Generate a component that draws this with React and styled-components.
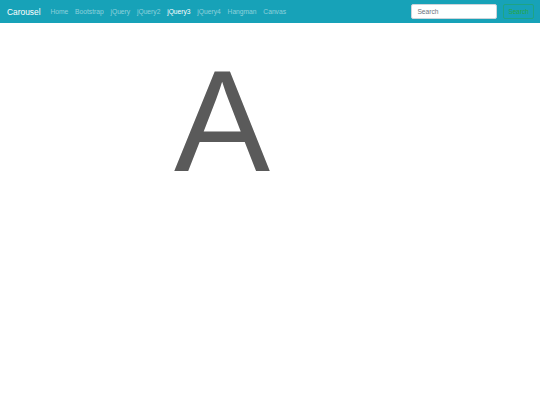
import React from 'react';
import styled, { createGlobalStyle } from 'styled-components';

const GlobalStyle = createGlobalStyle`
    body{
        margin: 0;
        background: #fff;
        font-family: "Liberation Sans", Arial, sans-serif;
    }
`;

const links = ['Home', 'Bootstrap', 'jQuery', 'jQuery2', 'jQuery3', 'jQuery4', 'Hangman', 'Canvas'];

function App() {
    return (
        <>
            <GlobalStyle />
            <NavbarStyled>
                <a className="brand" href="#">Carousel</a>
                <ul className="nav">
                    {links.map((l) => (
                        <NavItem key={l} active={l === 'jQuery3'}>
                            <a href="#">{l}</a>
                        </NavItem>
                    ))}
                </ul>
                <form className="search" onSubmit={(e) => e.preventDefault()}>
                    <input type="search" placeholder="Search" />
                    <button type="submit">Search</button>
                </form>
            </NavbarStyled>
            <SlideStyled>
                <div className="letter">A</div>
            </SlideStyled>
        </>
    )
}

const NavbarStyled = styled.nav`
    display: flex;
    align-items: center;
    height: 23px;
    padding: 0 6px 0 7px;
    background-color: #17a2b8;
    box-sizing: border-box;

    .brand{
        font-size: 8.4px;
        color: #fff;
        text-decoration: none;
        margin-right: 6.5px;
        white-space: nowrap;
    }

    .nav{
        display: flex;
        list-style: none;
        margin: 0;
        padding: 0;
        flex: 1;
    }

    .search{
        display: flex;
        align-items: center;
        gap: 6px;
        input{
            width: 86px;
            height: 15px;
            box-sizing: border-box;
            border: 1px solid #ced4da;
            border-radius: 2px;
            padding: 0 5px;
            font-family: inherit;
            font-size: 6.7px;
            color: #495057;
            outline: none;
            &::placeholder{
                color: #6c757d;
            }
        }
        button{
            height: 15px;
            box-sizing: border-box;
            padding: 0 4px;
            background: transparent;
            border: 1px solid rgba(40, 167, 69, 0.45);
            border-radius: 2px;
            color: #28a745;
            font-family: inherit;
            font-size: 6.5px;
            cursor: pointer;
        }
    }
`;

const NavItem = styled.li`
    a{
        display: block;
        padding: 0 3.4px;
        font-size: 6.7px;
        text-decoration: none;
        color: ${(p) => (p.active ? '#fff' : 'rgba(255,255,255,0.5)')};
    }
`;

const SlideStyled = styled.div`
    padding: 27px 0 0 174px;

    .letter{
        font-size: 144px;
        line-height: 1;
        color: #5a5a5a;
    }
`;

export default App
